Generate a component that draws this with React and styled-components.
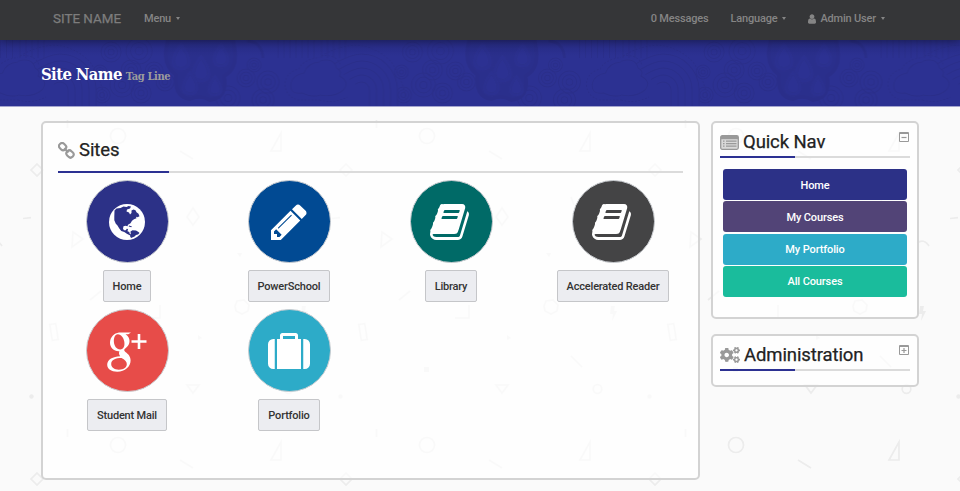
import React from "react";
import styled, { createGlobalStyle } from "styled-components";
import { FaCogs } from "react-icons/fa";

const GlobalStyle = createGlobalStyle`
  * { box-sizing: border-box; }
  body { margin: 0; background: #fafafa; font-family: Roboto, sans-serif; color: #222; overflow: hidden; }
`;

const Page = styled.div`
  position: relative;
  height: 491px;
  overflow: hidden;
  display: flex;
  flex-direction: column;
`;

const Doodles = styled.svg`
  position: absolute;
  inset: 0;
  width: 960px;
  height: 491px;
`;

const Navbar = styled.nav`
  position: relative;
  z-index: 2;
  flex: none;
  height: 40px;
  padding: 0 75px 3px 53px;
  display: flex;
  align-items: center;
  background: #353638;
  box-shadow: 0 1px 9px rgba(0, 0, 0, 0.4);
  color: #858585;
`;

const Brand = styled.a`
  width: 91px;
  font-size: 13.4px;
  -webkit-text-stroke: 0.25px;
  white-space: nowrap;
  color: #7d7d7d;
`;

const NavLinks = styled.div`
  display: flex;
  align-items: center;
  gap: 22px;
  margin-left: ${(p) => (p.$end ? "auto" : "0")};
`;

const NavItem = styled.a`
  display: flex;
  align-items: center;
  font-size: 11px;
  line-height: 14px;
  font-weight: 500;
  letter-spacing: -0.18px;
  white-space: nowrap;

  svg { width: 8px; height: 10px; margin-right: 4px; }
`;

const Caret = styled.i`
  margin-left: 5px;
  border: 2.5px solid transparent;
  border-top: 3px solid currentColor;
  border-bottom: 0;
`;

const Banner = styled.header`
  position: relative;
  flex: none;
  height: 67px;
  padding: 3px 41px 0;
  display: flex;
  align-items: center;
  background: #2c3192;
  border-bottom: 1px solid #a4a5cf;
`;

const BannerPattern = styled.svg`
  position: absolute;
  inset: 0;
  width: 960px;
  height: 66px;
`;

const SiteTitle = styled.h1`
  position: relative;
  margin: 0;
  display: flex;
  align-items: baseline;
  gap: 4px;
  font: bold 16.5px "DejaVu Serif Condensed", "DejaVu Serif", serif;
  font-stretch: condensed;
  letter-spacing: -0.6px;
  color: #fff;

  small { font-size: 11px; letter-spacing: -0.35px; color: #9c9c9c; }
`;

const Content = styled.main`
  position: relative;
  display: grid;
  grid-template-columns: 659px 208px;
  gap: 11px;
  align-items: start;
  padding: 14px 41px 0;
`;

const Sidebar = styled.aside`
  display: grid;
  gap: 15px;
`;

const Panel = styled.section`
  height: ${(p) => p.$h}px;
  padding: ${(p) => (p.$wide ? "15px 15px" : "7px 7px")};
  border: 2px solid #d3d3d3;
  border-radius: 5px;
  background: rgba(255, 255, 255, 0.7);
`;

const PanelHead = styled.div`
  display: flex;
  height: ${(p) => p.$h}px;
  margin-bottom: ${(p) => p.$after}px;
  align-items: flex-start;
  border-bottom: 2px solid;
  border-image: linear-gradient(to right, #2c3192 ${(p) => p.$mark}px, #dbdbdb ${(p) => p.$mark}px) 2;
`;

const PanelTitle = styled.h2`
  flex: 1;
  margin: 0;
  display: flex;
  align-items: center;
  gap: 4px;
  font-size: 18.5px;
  line-height: 24px;
  font-weight: 400;
  letter-spacing: -0.1px;
  -webkit-text-stroke: 0.25px;
  color: #222;

  svg { color: #999; flex: none; }
`;

const Toggle = styled.svg`
  width: 10px;
  height: 10px;
  margin: 2px 1px 0 0;
`;

const SiteGrid = styled.div`
  display: grid;
  grid-template-columns: repeat(4, 162px);
  grid-auto-rows: 129px;
  margin-left: -12px;
`;

const Site = styled.a`
  display: flex;
  flex-direction: column;
  align-items: center;
`;

const Disc = styled.span`
  width: 83px;
  height: 83px;
  display: grid;
  place-items: center;
  border: 1px solid #c9ccd0;
  border-radius: 50%;
  background: ${(p) => p.$color};
  color: #fff;

  svg { width: 42px; height: 42px; overflow: visible; }
`;

const SiteLabel = styled.span`
  height: 32px;
  margin-top: 7px;
  padding: 1px 9px 0;
  display: flex;
  align-items: center;
  border: 1px solid #c5c6c9;
  border-radius: 2px;
  background: #ecedf1;
  font-size: 11px;
  font-weight: 500;
  letter-spacing: -0.19px;
  color: #333;
  white-space: nowrap;
`;

const QuickLinks = styled.div`
  display: grid;
  gap: 1.3px;
  padding: 0 3px;
`;

const QuickLink = styled.a`
  height: 31px;
  padding-top: 1px;
  display: flex;
  align-items: center;
  justify-content: center;
  border-radius: 3px;
  background: ${(p) => p.$color};
  color: #fff;
  font-size: 11px;
  font-weight: 500;
  letter-spacing: -0.12px;
`;

const BookIcon = () => (
  <svg viewBox="0 0 1792 1792" fill="currentColor">
    <path d="M1639 478q40 57 18 129l-275 906q-19 64-76.500 107.500t-122.500 43.500h-923q-77 0-148.500-53.500t-99.500-131.500q-24-67-2-127 0-4 3-27t4-37q1-8-3-21.500t-3-19.500q2-11 8-21t16.500-23.500 16.500-23.500q23-38 45-91.500t30-91.500q3-10 .5-30t-.5-28q3-11 17-28t17-23q21-36 42-92t25-90q1-9-2.500-32t.5-28q4-13 22-30.500t22-22.500q19-26 42.500-84.500t27.500-96.500q1-8-3-25.500t-2-26.500q2-8 9-18t18-23 17-21q8-12 16.500-30.500t15-35 16-36 19.500-32 26.500-23.500 36-11.500 47.500 5.500l-1 3q38-9 51-9h761q74 0 114 56t18 130l-274 906q-36 119-71.500 153.500t-128.500 34.500h-869q-27 0-38 15-11 16-1 43 24 70 144 70h923q29 0 56-15.500t35-41.500l300-987q7-22 5-57 38 15 59 43zm-1064 2q-4 13 2 22.500t20 9.500h608q13 0 25.500-9.500t16.500-22.500l21-64q4-13-2-22.500t-20-9.500h-608q-13 0-25.500 9.500t-16.500 22.500zm-83 256q-4 13 2 22.500t20 9.500h608q13 0 25.500-9.500t16.500-22.500l21-64q4-13-2-22.500t-20-9.500h-608q-13 0-25.500 9.500t-16.500 22.500z" />
  </svg>
);

const PencilIcon = () => (
  <svg viewBox="0 0 1792 1792" fill="currentColor">
    <path d="M491 1536l91-91-235-235-91 91v107h128v128h107zm523-928q0-22-22-22-10 0-17 7l-542 542q-7 7-7 17 0 22 22 22 10 0 17-7l542-542q7-7 7-17zm-54-192l416 416-832 832h-416v-416zm683 96q0 53-37 90l-166 166-416-416 166-165q36-38 90-38 53 0 91 38l235 234q37 39 37 91z" />
  </svg>
);

const SuitcaseIcon = () => (
  <svg viewBox="0 0 1792 1792" fill="currentColor">
    <path d="M640 384h512v-128h-512v128zm-352 0v1280h-64q-92 0-158-66t-66-158v-832q0-92 66-158t158-66h64zm1120 0v1280h-1024v-1280h128v-160q0-40 28-68t68-28h576q40 0 68 28t28 68v160h128zm384 224v832q0 92-66 158t-158 66h-64v-1280h64q92 0 158 66t66 158z" />
  </svg>
);

const UserIcon = () => (
  <svg viewBox="256 128 1280 1536" fill="currentColor">
    <path d="M1536 1399q0 109-62.500 187t-150.500 78h-854q-88 0-150.500-78t-62.500-187q0-85 8.500-160.500t31.500-152 58.500-131 94-89 134.500-34.500q131 128 313 128t313-128q76 0 134.500 34.500t94 89 58.500 131 31.500 152 8.500 160.500zm-256-887q0 159-112.500 271.500t-271.500 112.500-271.500-112.500-112.500-271.500 112.500-271.500 271.500-112.500 271.500 112.500 112.500 271.500z" />
  </svg>
);

const GlobeIcon = () => (
  <svg viewBox="0 0 42 42">
    <circle cx="21" cy="21" r="18" fill="#fff" />
    <path fill="#2c3187" d="M8.500 9.500l2-2 4-.5 3-1.500 3 .5 2-1 2.500.5-1 2-3 1-.5 2 2.500 1 1 2 1.500-1.500 0-2.500 2-1 2 .8 1 2 2 1.500 1 2.500-2 1-1.500-.5.5 1.500-2.500 1-2 1.500-1.500 2.500-2.500 1.500-.5 1.500-2-.5-2 .5-.5 2.500 1 1.500 1.800 0 1-1.500 1.200.3-.5 2.200 1.800.6.5 2.200 2.500 1-2.500.2-3-1.500-2.500-1.800-3-1-2-2.500-2-3.200-1.500-1.500-1.500-3.500 0-4zM24.500 30.500l2-1.300 3.500.3 2.500 1.500 1 1-1.500 1.500-2 .5-1.500 1.500-3.500 1.500-1-2 .8-2zM23 24.500l3 .9-.8.8-2.500-.7z" />
  </svg>
);

const GooglePlusIcon = () => (
  <svg viewBox="0 0 42 42" fill="none" stroke="#fff">
    <path fill="#fff" fillRule="evenodd" stroke="none" d="M13 2.500H25L22.300 4.200H19.500C22.500 6 23.500 8.500 23.500 11c0 4-2.500 6-4.300 7.600-1.400 1.200-1.200 2.200.2 3.400 3 2.200 5.200 4.500 5.200 8.500 0 6-5.500 11.200-13.300 11.200C5 41.700 1.200 39 1.200 34.800c0-5.500 5.800-8.300 13-8.600-1.300-1.600-1.500-3-.8-4.900C8 21.700 4 17.800 4 12.800 4 7 8.200 3.200 13 2.500zM11.700 4.300c-5.700.4-5.200 15.200 2.600 15.200 7.200 0 4.400-15.500-2.600-15.200zM15.500 28c-6 0-10.300 1.900-10.300 6 0 3.300 3 5.700 7.600 5.700 5.400 0 8-2.500 8-5.700 0-2.600-2-4.300-5.300-6z" />
    <path strokeWidth="2.600" d="M25.500 11.500H40.500M33 4V19" />
  </svg>
);

const ChainIcon = () => (
  <svg width="17" height="17" viewBox="0 0 17 17" fill="none" stroke="currentColor" strokeWidth="2.100">
    <rect x="-3.700" y="-3" width="7.400" height="6" rx="2.700" transform="translate(4.600 4.600) rotate(45)" />
    <rect x="-3.700" y="-3" width="7.400" height="6" rx="2.700" transform="translate(12 12) rotate(45)" />
    <path d="M6.200 6.200l4.300 4.300" />
  </svg>
);

const ListIcon = () => (
  <svg width="19" height="15" viewBox="0 0 19 15">
    <rect x=".7" y=".7" width="17.600" height="13.600" rx="1.500" fill="#d9d9d9" stroke="#999" strokeWidth="1.300" />
    <path d="M1 1h17v3.200H1z" fill="#999" />
    <path d="M3 6.200h1.500M3 8.700h1.500M3 11.200h1.500M6 6.200h10.500M6 8.700h10.500M6 11.200h10.500" stroke="#999" strokeWidth="1.300" />
  </svg>
);

const PanelToggle = ({ plus }) => (
  <Toggle viewBox="0 0 10 10" fill="none" stroke="#999">
    <path d="M.5.500h9v9h-9zM.5 1.500h9" />
    <path d={plus ? "M2.500 5.500h5M5 3v5" : "M2.500 5.500h5"} strokeWidth="1.200" />
  </Toggle>
);

const PageDoodles = () => (
  <Doodles>
    <defs>
      <pattern id="shapes" width="309" height="309" patternUnits="userSpaceOnUse" y="115">
        <g transform="translate(0 -115)" fill="none" stroke="#ececec" strokeWidth="1.700">
          <path d="M67.500 120v8M180 151l13 8M281 133v18h-10zM73 232l10 7-11 8zM90 300l11-9M160 305v13h-14M262 356l11 11M187 385h12l-6 8zM23 218.500l8-.8M262 197l3 8" />
          <path d="M37 164l6 6-6 6-6-6zM193 208l6 9-6 8-6-8z" />
          <circle cx="118" cy="136" r="7.500" />
          <path d="M237 301l7-1 5 5-1 6-6 3-6-3-1-5z" />
          <rect x="-3" y="-8" width="6" height="16" transform="translate(54 332) rotate(-9)" />
          <circle cx="288.500" cy="389" r="4.300" />
          <path d="M299 243q7-5 12 3M-10 243q7-5 12 3" />
          <g fill="#ececec" stroke="none">
            <path d="M302 306h4l-1 5h3l-5 10 1-7h-3zM237 253h5l-2 4zM198 335l4 3-4 2zM115 367h5v5h-5z" />
            <circle cx="31.500" cy="396.500" r="2.200" />
          </g>
        </g>
      </pattern>
    </defs>
    <rect width="960" height="491" fill="url(#shapes)" />
  </Doodles>
);

const SWIRLS = [
  [93, 12, 10], [121, 11, 13], [113, 30, 10], [136, 31, 9], [104, 45, 12], [84, 55, 8], [147, 42, 9],
  [123, 53, 10], [228, 38, 9], [250, 42, 11], [210, 58, 12], [245, 60, 11], [236, 25, 7], [82, 32, 7],
];
const DROPS = [[163, 20, 9], [203, 18, 8], [183, 32, 9], [172, 46, 8], [197, 48, 7]];

const BannerArt = () => (
  <BannerPattern>
    <defs>
      <linearGradient id="shade" x2="0" y2="1">
        <stop offset="0" stopColor="#17194f" stopOpacity=".2" />
        <stop offset=".25" stopColor="#17194f" stopOpacity="0" />
      </linearGradient>
      <pattern id="swirls" x="18" width="301.500" height="66" patternUnits="userSpaceOnUse">
        <g fill="none" stroke="#292d88" strokeWidth="1">
          {[2, 8, 14, 20, 26, 260, 266, 272, 278, 284, 290, 296].map((x) => (
            <path key={x} d={`M${x} 0V18`} />
          ))}
          {SWIRLS.map(([x, y, r]) => (
            <g key={`${x}-${y}`}>
              <circle cx={x} cy={y} r={r} />
              <circle cx={x} cy={y} r={r * 0.66} />
              <circle cx={x} cy={y} r={r * 0.3} />
            </g>
          ))}
          {[8, 15, 22, 29, 36].map((r) => (
            <path key={r} fill={r === 36 ? "#2c3192" : "none"} d={`M${42 - r * 0.8} ${50 - r * 0.7}Q${42 - r * 0.3} ${50 - r} 42 ${50 - r}A${r} ${r} 0 0 1 ${42 + r} 50V66`} />
          )).reverse()}
          <path strokeDasharray="2 1.500" d="M2 16Q42-8 72 22Q84 40 88 66" />
          <path fill="#2c3192" d="M-2 22Q14 16 17 28Q23 31 20 36Q31 42 24 50Q14 58 0 55M303 22Q290 22 286 33Q275 35 273 43Q271 55 284 53Q294 58 303 55" />
          <path strokeDasharray="2 1.500" d="M-2 17Q16 12 21 25M303 17Q284 20 281 29Q268 32 267 44Q267 56 280 60H303M0 60Q14 64 28 57" />
          <path strokeWidth="4" fill="#2a2e8b" d="M150 0Q143 24 158 35Q156 57 172 59Q182 54 192 60Q210 58 206 36Q222 28 215 0z" />
          <path strokeWidth="3" d="M229 1Q244 2 245 18" />
          {DROPS.map(([x, y, r]) => (
            <g key={`${x}-${y}`}>
              <path fill="#2b308f" strokeWidth=".5" d={`M${x} ${y - r * 2}C${x + r * 1.800} ${y + 2} ${x + r} ${y + r * 1.200} ${x} ${y + r * 1.200}S${x - r * 1.800} ${y + 2} ${x} ${y - r * 2}`} />
              <path fill="#2c3192" strokeWidth=".6" d={`M${x} ${y - r * 1.4}C${x + r * 1.200} ${y + 2} ${x + r * 0.6} ${y + r * 0.8} ${x} ${y + r * 0.8}S${x - r * 1.200} ${y + 2} ${x} ${y - r * 1.4}`} />
            </g>
          ))}
        </g>
      </pattern>
    </defs>
    <rect width="960" height="66" fill="url(#swirls)" opacity=".8" />
    <rect width="960" height="66" fill="url(#shade)" />
  </BannerPattern>
);

const SITES = [
  ["Home", "#2c3187", GlobeIcon],
  ["PowerSchool", "#014a93", PencilIcon],
  ["Library", "#006a67", BookIcon],
  ["Accelerated Reader", "#444445", BookIcon],
  ["Student Mail", "#e74c49", GooglePlusIcon],
  ["Portfolio", "#2dabc8", SuitcaseIcon],
];

const LINKS = [
  ["Home", "#2c3187"],
  ["My Courses", "#524477"],
  ["My Portfolio", "#2dabc8"],
  ["All Courses", "#1abc9c"],
];

export default function App() {
  return (
    <Page>
      <GlobalStyle />
      <PageDoodles />
      <Navbar>
        <Brand>SITE NAME</Brand>
        <NavLinks>
          <NavItem>Menu<Caret /></NavItem>
        </NavLinks>
        <NavLinks $end>
          <NavItem>0 Messages</NavItem>
          <NavItem>Language<Caret /></NavItem>
          <NavItem><UserIcon />Admin User<Caret /></NavItem>
        </NavLinks>
      </Navbar>
      <Banner>
        <BannerArt />
        <SiteTitle>Site Name <small>Tag Line</small></SiteTitle>
      </Banner>
      <Content>
        <Panel $wide $h={359}>
          <PanelHead $h={35} $after={7} $mark={112}>
            <PanelTitle><ChainIcon />Sites</PanelTitle>
          </PanelHead>
          <SiteGrid>
            {SITES.map(([label, color, Icon]) => (
              <Site key={label}>
                <Disc $color={color}><Icon /></Disc>
                <SiteLabel>{label}</SiteLabel>
              </Site>
            ))}
          </SiteGrid>
        </Panel>
        <Sidebar>
          <Panel $h={198}>
            <PanelHead $h={28} $after={11} $mark={75}>
              <PanelTitle><ListIcon />Quick Nav</PanelTitle>
              <PanelToggle />
            </PanelHead>
            <QuickLinks>
              {LINKS.map(([label, color]) => (
                <QuickLink key={label} $color={color}>{label}</QuickLink>
              ))}
            </QuickLinks>
          </Panel>
          <Panel $h={53}>
            <PanelHead $h={28} $after={0} $mark={75}>
              <PanelTitle><FaCogs size={20} />Administration</PanelTitle>
              <PanelToggle plus />
            </PanelHead>
          </Panel>
        </Sidebar>
      </Content>
    </Page>
  );
}
